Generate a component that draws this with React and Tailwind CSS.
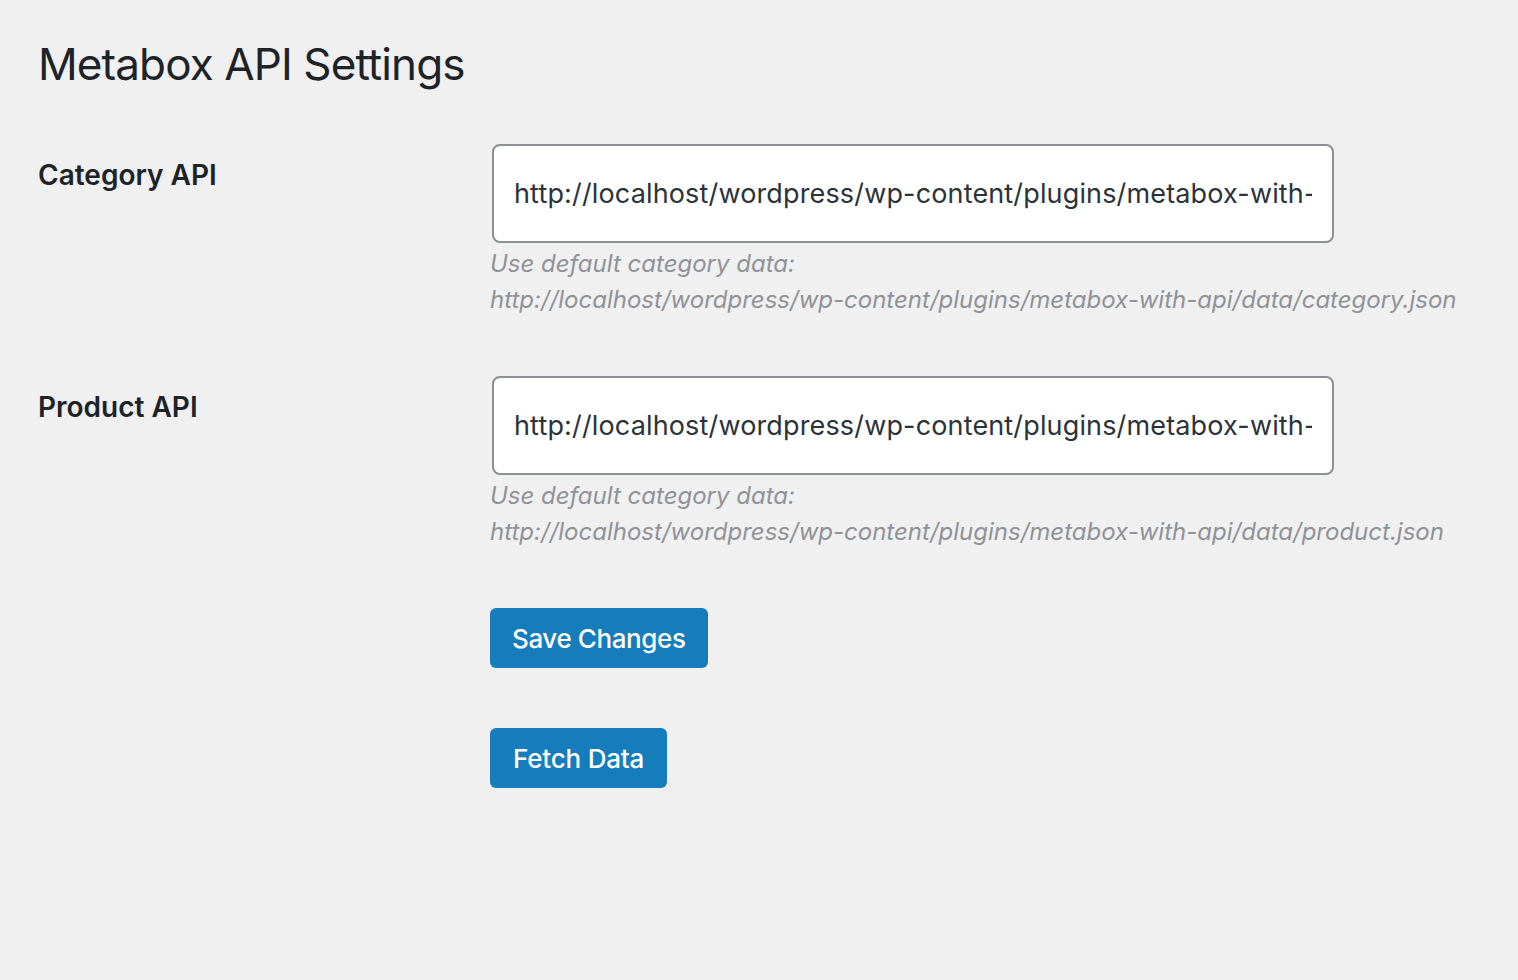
import React from 'react';

const FONT = "font-['Inter','Noto_Sans',sans-serif]";

const fields = [
  {
    label: 'Category API',
    value: 'http://localhost/wordpress/wp-content/plugins/metabox-with-api/data/category.json',
    hint: 'http://localhost/wordpress/wp-content/plugins/metabox-with-api/data/category.json',
  },
  {
    label: 'Product API',
    value: 'http://localhost/wordpress/wp-content/plugins/metabox-with-api/data/product.json',
    hint: 'http://localhost/wordpress/wp-content/plugins/metabox-with-api/data/product.json',
  },
];

const App = () => {
  return (
    <div className={`min-h-[980px] w-full bg-[#f0f0f1] pl-[38px] pt-[36px] text-[#1d2327] ${FONT}`}>
      <h1 className="text-[44px] leading-[56px] font-normal tracking-[-0.9px]">Metabox API Settings</h1>

      <div className="mt-[52px] flex flex-col gap-[58px]">
        {fields.map((f) => (
          <div key={f.label} className="flex">
            <div className="w-[452px] shrink-0 pt-[13px] text-[28px] leading-[36px] font-semibold">
              {f.label}
            </div>
            <div className="flex flex-col">
              <input
                readOnly
                value={f.value}
                className="ml-[2px] h-[99px] w-[842px] rounded-[8px] border-2 border-[#8c8f94] bg-white px-[20px] text-[27px] tracking-[0.15px] text-[#2c3338] outline-none"
              />
              <p className="mt-[3px] text-[24px] leading-[36px] italic text-[#8f9296]">
                Use default category data:
                <br />
                {f.hint}
              </p>
            </div>
          </div>
        ))}
      </div>

      <div className="ml-[452px] mt-[58px] flex flex-col items-start gap-[60px]">
        <button className="h-[60px] rounded-[6px] bg-[#167dbd] px-[22px] text-[26px] font-medium tracking-[-0.4px] text-white">
          Save Changes
        </button>
        <button className="h-[60px] rounded-[6px] bg-[#167dbd] px-[23px] text-[26px] font-medium tracking-[-0.2px] text-white">
          Fetch Data
        </button>
      </div>
    </div>
  );
};

export default App;
